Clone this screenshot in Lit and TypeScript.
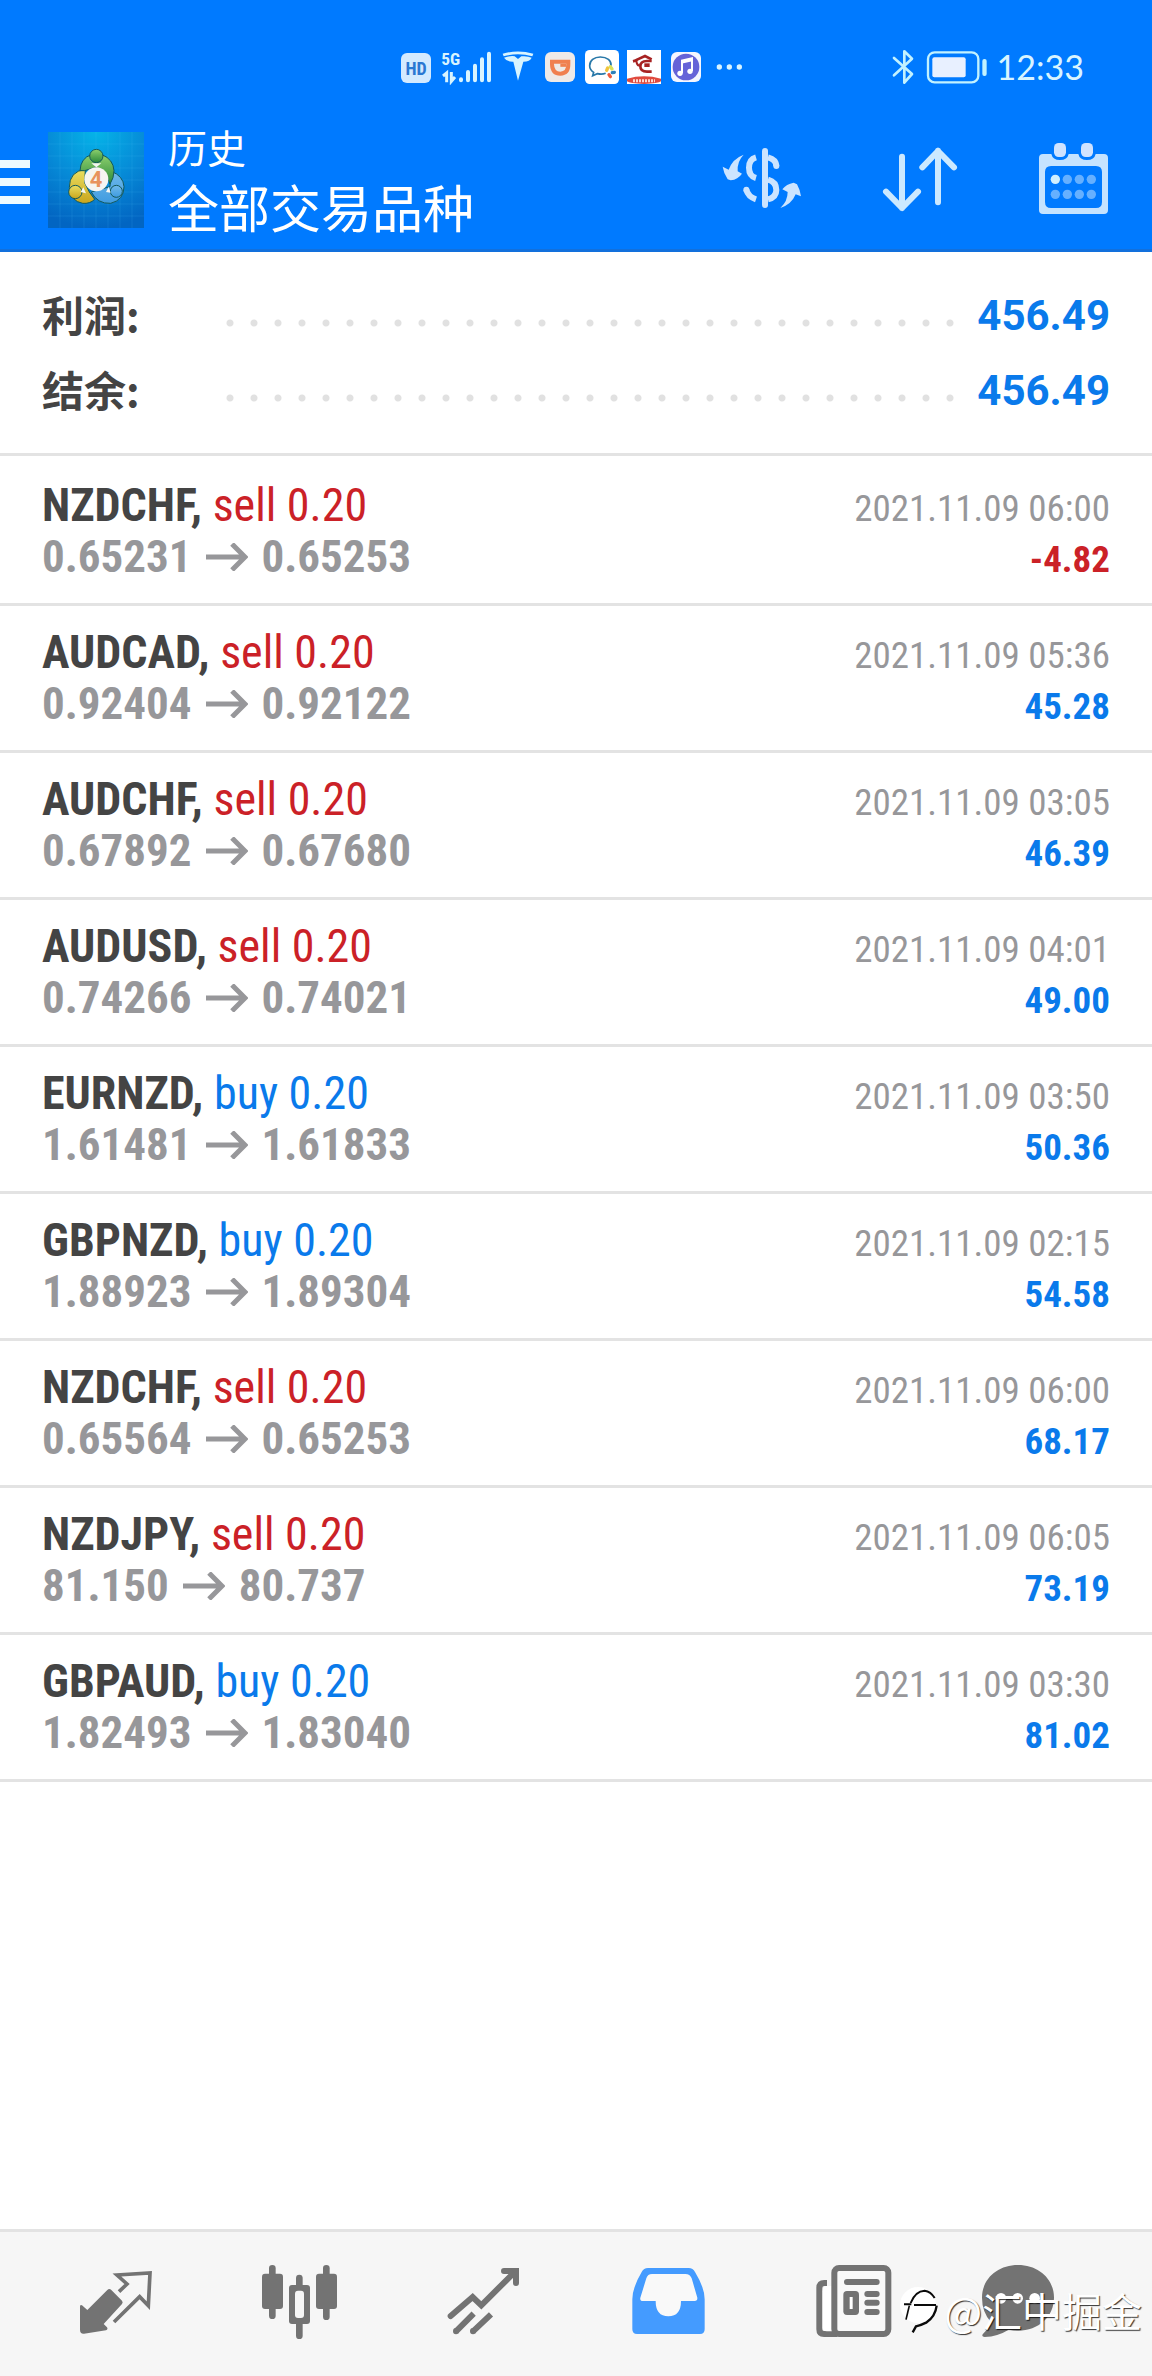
import { LitElement, html, svg, css } from "lit";
import { customElement } from "lit/decorators.js";

interface Deal {
  symbol: string;
  side: "sell" | "buy";
  open: string;
  close: string;
  time: string;
  profit: string;
}

const deals: Deal[] = [
  { symbol: "NZDCHF", side: "sell", open: "0.65231", close: "0.65253", time: "2021.11.09 06:00", profit: "-4.82" },
  { symbol: "AUDCAD", side: "sell", open: "0.92404", close: "0.92122", time: "2021.11.09 05:36", profit: "45.28" },
  { symbol: "AUDCHF", side: "sell", open: "0.67892", close: "0.67680", time: "2021.11.09 03:05", profit: "46.39" },
  { symbol: "AUDUSD", side: "sell", open: "0.74266", close: "0.74021", time: "2021.11.09 04:01", profit: "49.00" },
  { symbol: "EURNZD", side: "buy", open: "1.61481", close: "1.61833", time: "2021.11.09 03:50", profit: "50.36" },
  { symbol: "GBPNZD", side: "buy", open: "1.88923", close: "1.89304", time: "2021.11.09 02:15", profit: "54.58" },
  { symbol: "NZDCHF", side: "sell", open: "0.65564", close: "0.65253", time: "2021.11.09 06:00", profit: "68.17" },
  { symbol: "NZDJPY", side: "sell", open: "81.150", close: "80.737", time: "2021.11.09 06:05", profit: "73.19" },
  { symbol: "GBPAUD", side: "buy", open: "1.82493", close: "1.83040", time: "2021.11.09 03:30", profit: "81.02" },
];

const totals = [
  { label: "利润:", value: "456.49" },
  { label: "结余:", value: "456.49" },
];

@customElement("status-bar")
export class StatusBar extends LitElement {
  static styles = css`
    :host {
      display: flex;
      align-items: center;
      justify-content: flex-end;
      height: 36px;
      padding: 49px 68px 0 0;
      color: #d8f4ff;
      font-family: Lato, "Noto Sans", sans-serif;
      font-size: 34px;
      line-height: 36px;
    }
    svg { display: block; flex: none; }
    .notices { width: 344px; height: 36px; margin-right: 148px; }
    .power { width: 96px; height: 36px; margin-right: 9px; }
    .hd { font: 700 54px "Roboto Condensed", "Liberation Sans Narrow", sans-serif; fill: #2b78d2; }
    .net { font: 700 52px "Roboto Condensed", "Liberation Sans Narrow", sans-serif; fill: #d8f4ff; }
  `;

  render() {
    return html`
      <svg class="notices" viewBox="57 57 1032 108" aria-hidden="true">
        <rect x="60" y="69" width="90" height="90" rx="18" fill="#d3eaff" />
        <text class="hd" x="105" y="134" text-anchor="middle">HD</text>
        <text class="net" x="181" y="106">5G</text>
        <g fill="none" stroke="#d8f4ff" stroke-width="9">
          <path d="M186 138l11-9v28M211 126v28l11-13" />
        </g>
        <g stroke="#d8f4ff" stroke-width="12" stroke-linecap="round">
          <path d="M240 148v3M261 126v25M282 107v44M303 88v63M324 71v80" />
        </g>
        <path d="M365 71q46-13 92 0l-3 8q-43-12-86 0z" fill="#d8f4ff" />
        <path d="M369 83q22-7 32-4l10 8 10-8q18-2 31 4-5 12-25 12l-16 57-14-57q-20 1-28-12z" fill="#d8f4ff" />
        <rect x="492" y="66" width="90" height="90" rx="18" fill="#eeeae8" />
        <path d="M513 95h49v8q0 28-24 28t-25-28z" fill="none" stroke="#f08050" stroke-width="12" />
        <path d="M538 106h18" fill="none" stroke="#f08050" stroke-width="9" />
        <rect x="612" y="60" width="102" height="102" rx="14" fill="#fff" />
        <path d="M690 107c2-15-12-26-32-26-19 0-32 11-32 26 0 10 6 16 12 20l-3 10 14-6c8 2 17 2 25-1" fill="none" stroke="#2878a8" stroke-width="5" />
        <g stroke-width="10" stroke-linecap="round">
          <path d="M680 114l-3 7" stroke="#f2c43c" /><path d="M688 110l5 7" stroke="#d9e05a" />
          <path d="M700 127l-6 1" stroke="#2d80ba" /><path d="M684 134l4 6" stroke="#ef5a3a" />
        </g>
        <rect x="738" y="60" width="102" height="102" fill="#fff" />
        <path d="M756 94q8-2 14-6l22-10 20 10" fill="none" stroke="#a72222" stroke-width="8" />
        <path d="M812 93h-14q-20 0-20 16t20 16h14" fill="none" stroke="#a72222" stroke-width="8" />
        <path d="M766 92q0 10 8 16" fill="none" stroke="#a72222" stroke-width="6" />
        <rect x="790" y="100" width="16" height="11" fill="#a72222" />
        <path d="M738 146q51-14 102 0v8q-8 6-51 8-43-2-51-8z" fill="#e04a3e" />
        <path d="M756 152h66" stroke="#ffd9d0" stroke-width="9" stroke-dasharray="6 3" />
        <rect x="870" y="66" width="90" height="90" rx="18" fill="#f4f6ff" />
        <circle cx="915" cy="111" r="40" fill="#6563d8" />
        <path d="M903 130V92l30-7v38" fill="none" stroke="#fff" stroke-width="6" />
        <path d="M903 96l30-7" stroke="#fff" stroke-width="9" />
        <circle cx="897" cy="130" r="8" fill="#fff" /><circle cx="927" cy="124" r="8" fill="#fff" />
        <g fill="#d8f4ff"><circle cx="1015" cy="111" r="8" /><circle cx="1045" cy="111" r="8" /><circle cx="1075" cy="111" r="8" /></g>
      </svg>
      <svg class="power" viewBox="98 57 288 108" aria-hidden="true">
        <path d="M104 84l54 48-23 26V64l23 22-54 50" fill="none" stroke="#c2f2ff" stroke-width="8" stroke-linejoin="round" stroke-linecap="round" />
        <rect x="206" y="67" width="151" height="90" rx="20" fill="none" stroke="#c2f2ff" stroke-width="7" />
        <rect x="219" y="82" width="100" height="60" rx="6" fill="#e8f0ff" />
        <rect x="369" y="87" width="13" height="51" rx="6" fill="#c2f2ff" />
      </svg>
      <span>12:33</span>
    `;
  }
}

@customElement("history-header")
export class HistoryHeader extends LitElement {
  static styles = css`
    :host {
      display: flex;
      align-items: center;
      height: 144px;
      padding: 46px 42px 0 0;
      box-sizing: border-box;
      color: #fff;
      font-family: "Noto Sans CJK SC", sans-serif;
    }
    button {
      display: block;
      flex: none;
      padding: 0;
      border: 0;
      background: none;
      cursor: pointer;
    }
    svg { display: block; width: 100%; height: 100%; }
    .menu { width: 30px; height: 96px; }
    .logo { width: 96px; height: 96px; margin-left: 18px; flex: none; }
    .titles { flex: 1; margin-left: 24px; padding-bottom: 2px; }
    h1, p { margin: 0; font-weight: 400; white-space: nowrap; }
    p { font-size: 39px; line-height: 54px; }
    h1 { font-size: 51px; line-height: 66px; }
    .actions { display: flex; gap: 78px; }
    .swap, .sort, .calendar { height: 78px; }
    .swap, .sort { width: 80px; }
    .calendar { width: 72px; }
    .four { font: 700 66px Roboto, sans-serif; fill: #e8935e; }
  `;

  render() {
    return html`
      <button class="menu" aria-label="菜单">
        <svg viewBox="0 66 90 288"><path d="M0 150h90v24H0zM0 204h90v24H0zM0 258h90v24H0z" fill="#eefaff" /></svg>
      </button>
      <div class="logo">
        <svg viewBox="144 66 288 288" aria-hidden="true">
          <defs>
            <radialGradient id="sky" cx=".5" cy="0" r="1">
              <stop offset="0" stop-color="#05b4e8" /><stop offset=".55" stop-color="#0688d6" /><stop offset="1" stop-color="#0265c2" />
            </radialGradient>
            <linearGradient id="green" x2="0" y2="1"><stop stop-color="#8ed06d" /><stop offset="1" stop-color="#2c8a3b" /></linearGradient>
            <linearGradient id="gold" x2="0" y2="1"><stop stop-color="#eadf62" /><stop offset="1" stop-color="#c9a51c" /></linearGradient>
            <linearGradient id="blue" x2="0" y2="1"><stop stop-color="#6fb9ea" /><stop offset="1" stop-color="#3f9be0" /></linearGradient>
          </defs>
          <rect x="144" y="66" width="288" height="288" fill="url(#sky)" />
          <path d="M180 66v288M216 66v288M252 66v288M288 66v288M324 66v288M360 66v288M396 66v288M144 102h288M144 138h288M144 174h288M144 210h288M144 246h288M144 282h288M144 318h288" stroke="#5cc8f5" stroke-opacity=".22" stroke-width="2" />
          <g stroke-linejoin="round" stroke="#14595a" stroke-width="3">
            <path d="M334 184q36 14 38 46 0 40-40 50-40 2-58-34l20-6 36-10z" fill="url(#blue)" />
            <path d="M208 232q0-48 48-54l-2 40 14 28 16 22q-14 14-36 12-36-6-40-48z" fill="url(#gold)" />
            <path d="M240 182q2-38 34-48h32q34 14 36 48 0 22-12 40l-10-24-32-26-34 10z" fill="url(#green)" />
            <circle cx="289" cy="138" r="20" fill="url(#green)" />
            <circle cx="226" cy="246" r="20" fill="url(#gold)" />
            <circle cx="349" cy="244" r="18" fill="url(#blue)" />
          </g>
          <path d="M274 160h30l-15 12zM250 232l8 18-16-4zM326 230l-8 16 14 2z" fill="#f4f6f2" />
          <circle cx="289" cy="208" r="36" fill="#f6f5f2" />
          <text class="four" x="288" y="231" text-anchor="middle">4</text>
        </svg>
      </div>
      <div class="titles">
        <p>历史</p>
        <h1>全部交易品种</h1>
      </div>
      <div class="actions">
        <button class="swap" aria-label="货币">
          <svg viewBox="66 63 240 234" fill="#cce4ff">
            <path d="M131 104q-20 20-18 50l13 7q-12 17-34 20l-9-3q-12-18-15-38l18 9q12-33 45-45z" />
            <path d="M241 264q22-20 22-48l-16-8q12-16 34-20l10 5q10 18 12 36l-16-6q-12 30-46 41z" />
            <rect x="186" y="84" width="18" height="180" rx="9" />
            <g fill="none" stroke="#cce4ff" stroke-width="18">
              <path d="M168 112q-21 6-21 31t21 31M204 112q24 6 25 26" />
              <path d="M204 179q25 7 25 31 0 22-25 28M168 238q-24-8-29-29" />
              <path d="M229 137v1M139 209v1" stroke-linecap="round" />
            </g>
          </svg>
        </button>
        <button class="sort" aria-label="排序">
          <svg viewBox="540 63 228 234" fill="none" stroke="#cce9ff" stroke-width="18" stroke-linecap="round" stroke-linejoin="round">
            <path d="M600 110v154M552 215l48 49 48-49M708 247V92M661 142l47-49 48 49" />
          </svg>
        </button>
        <button class="calendar" aria-label="日期">
          <svg viewBox="1017 63 216 234">
            <path fill-rule="evenodd" fill="#c5e3ff" d="M1032 102h25q4 18 26 18t26-18h29q4 18 26 18t26-18h25q12 0 12 12v156q0 12-12 12h-183q-12 0-12-12V114q0-12 12-12zM1056 138q-18 0-18 18v90q0 18 18 18h135q18 0 18-18v-90q0-18-18-18z" />
            <rect x="1065" y="69" width="36" height="42" rx="14" fill="#d0e3ff" />
            <rect x="1146" y="69" width="36" height="42" rx="14" fill="#d0e3ff" />
            ${[0, 1, 2, 3, 4, 5, 6, 7].map(
              (i) => svg`<circle cx=${1069 + (i % 4) * 36} cy=${i < 4 ? 178 : 223} r="14" fill=${i ? "#66b0ff" : "#cfefff"} />`,
            )}
          </svg>
        </button>
      </div>
    `;
  }
}

@customElement("totals-panel")
export class TotalsPanel extends LitElement {
  static styles = css`
    :host {
      display: block;
      padding: 24px 42px 27px;
      border-bottom: 3px solid #e3e3e3;
    }
    dl { margin: 0; }
    .row { display: flex; align-items: center; height: 75px; }
    dt {
      width: 176px;
      color: #444;
      font: 700 42px/75px "Noto Sans CJK SC", sans-serif;
    }
    .dots {
      flex: 1;
      height: 8px;
      margin: 18px 22px 0 0;
      background: radial-gradient(circle at 12px 4px, #e1e1e1 3px, transparent 4px) 0 0 / 24px 8px repeat-x;
    }
    dd {
      margin: 0;
      padding-top: 4px;
      color: #0a7aeb;
      font: 700 42px/60px Roboto, sans-serif;
    }
  `;

  render() {
    return html`
      <dl>
        ${totals.map((t) => html`<div class="row"><dt>${t.label}</dt><span class="dots"></span><dd>${t.value}</dd></div>`)}
      </dl>
    `;
  }
}

@customElement("deal-list")
export class DealList extends LitElement {
  static styles = css`
    :host {
      display: block;
      padding-top: 3px;
      font-family: "Roboto Condensed", "Liberation Sans Narrow", sans-serif;
    }
    ul { margin: 0; padding: 0; list-style: none; }
    li {
      padding: 21px 42px;
      border-bottom: 3px solid #e3e3e3;
      line-height: 51px;
    }
    .line {
      display: flex;
      align-items: baseline;
      justify-content: space-between;
      height: 51px;
      white-space: nowrap;
    }
    .deal { font-size: 46px; font-weight: 700; color: #444; }
    .sell, .buy { font-weight: 400; }
    .prices {
      display: flex;
      align-items: center;
      gap: 14px;
      font-size: 45px;
      font-weight: 700;
      color: #97979a;
    }
    .arrow { width: 42px; height: 28px; }
    .time { font-size: 37px; color: #97979a; }
    .profit { font-size: 37px; font-weight: 700; }
    .sell, .loss { color: #cb2127; }
    .buy, .gain { color: #0a7aeb; }
  `;

  render() {
    return html`
      <ul>
        ${deals.map(
          (d) => html`
            <li>
              <div class="line">
                <span class="deal">${d.symbol}, <span class=${d.side}>${d.side} 0.20</span></span>
                <time class="time">${d.time}</time>
              </div>
              <div class="line">
                <span class="prices">
                  <span>${d.open}</span>
                  <svg class="arrow" viewBox="0 0 42 28" aria-label="→"><path d="M0 14h38M26 1l13 13-13 13" fill="none" stroke="currentColor" stroke-width="5" /></svg>
                  <span>${d.close}</span>
                </span>
                <span class="profit ${d.profit.startsWith("-") ? "loss" : "gain"}">${d.profit}</span>
              </div>
            </li>
          `,
        )}
      </ul>
    `;
  }
}

@customElement("tab-bar")
export class TabBar extends LitElement {
  static styles = css`
    :host {
      display: block;
      position: relative;
      border-top: 3px solid #e3e3e3;
      background: #f6f6f6;
    }
    nav {
      display: grid;
      grid-template-columns: repeat(5, 184fr) 148fr;
      height: 144px;
      padding: 0 60px 0 24px;
    }
    button {
      display: grid;
      place-items: center;
      padding: 0;
      border: 0;
      background: none;
      color: #737373;
      cursor: pointer;
    }
    button[aria-current] { color: #449bff; }
    svg { display: block; width: 84px; height: 84px; }
    .mark {
      position: absolute;
      right: 10px;
      bottom: 36px;
      display: flex;
      align-items: center;
      gap: 4px;
      color: #fff;
      font: 400 40px/60px "Noto Sans CJK SC", sans-serif;
      text-shadow: 1px 1px 1px rgba(0, 0, 0, 0.8);
      pointer-events: none;
    }
    .mark svg { width: 42px; height: 50px; }
  `;

  render() {
    return html`
      <nav>
        <button aria-label="行情">
          <svg viewBox="222 156 252 252">
            <path d="M240 290q0-8 6-4l16 14 60-60q6-6 12 0l32 32q4 5 0 10l-55 60 10 10q4 6-3 9l-66 10q-12 1-12-12z" fill="currentColor" />
            <path d="M357 245l24-23-30-27 99-6-5 98-26-27-77 76" fill="none" stroke="currentColor" stroke-width="11" />
          </svg>
        </button>
        <button aria-label="图表">
          <svg viewBox="774 156 252 252" fill="currentColor">
            <rect x="807" y="165" width="20" height="162" rx="10" /><rect x="786" y="191" width="63" height="106" rx="9" />
            <rect x="969" y="165" width="20" height="165" rx="10" /><rect x="948" y="191" width="63" height="106" rx="9" />
            <rect x="888" y="194" width="20" height="193" rx="10" /><rect x="867" y="225" width="63" height="117" rx="9" />
            <rect x="885" y="242" width="27" height="82" rx="9" fill="#f6f6f6" />
          </svg>
        </button>
        <button aria-label="交易">
          <svg viewBox="126 156 252 252" fill="none" stroke="currentColor" stroke-width="18">
            <path d="M152 318l66-57 26 25 100-100" stroke-linecap="round" />
            <path d="M312 183h36v36" stroke-linecap="round" />
            <path d="M328 174h22q7 0 7 7v22z" fill="currentColor" stroke="none" />
            <path d="M168 364l53-53M219 364l54-51" /><path d="M168 363v1M219 363v1" stroke-linecap="round" />
          </svg>
        </button>
        <button aria-label="历史" aria-current="page">
          <svg viewBox="678 156 252 252">
            <path d="M744 174h122q13 0 19 12 29 47 29 82v90q0 14-14 14H711q-14 0-14-14v-90q0-35 28-82 6-12 19-12z" fill="currentColor" />
            <path d="M756 192h100q14 0 19 13l17 58q1 10-8 10h-41q0 46-38 46t-38-46h-38q-10 0-8-10l18-58q4-13 17-13z" fill="#f9f9f9" />
          </svg>
        </button>
        <button aria-label="新闻">
          <svg viewBox="90 156 252 252">
            <path d="M141 219h-8q-15 0-15 15v124q0 14 14 14h40" fill="none" stroke="currentColor" stroke-width="18" />
            <path fill="#fff" d="M128 244q0-16 14-16h14v136h-16q-12 0-12-12z" />
            <rect x="163" y="174" width="162" height="198" rx="14" fill="#f9f9f9" stroke="currentColor" stroke-width="18" />
            <path d="M201 216h89M262 252h28M262 278h28M262 306h28" stroke="currentColor" stroke-width="18" stroke-linecap="round" />
            <rect x="190" y="243" width="47" height="72" rx="11" fill="currentColor" /><rect x="209" y="261" width="9" height="36" fill="#fff" />
          </svg>
        </button>
        <button aria-label="聊天">
          <svg viewBox="588 156 252 252">
            <path d="M714 165c62 0 108 42 108 98s-46 99-108 99q-14 0-28-3-32 20-72 22-10-1-6-8 18-18 24-38-26-30-26-72c0-56 46-98 108-98z" fill="currentColor" />
            <circle cx="663" cy="265" r="16" fill="#fff" /><circle cx="713" cy="265" r="16" fill="#fff" /><circle cx="764" cy="265" r="16" fill="#fff" />
          </svg>
        </button>
      </nav>
      <div class="mark">
        <svg viewBox="6 30 126 150" aria-hidden="true">
          <circle cx="66" cy="90" r="54" fill="#fff" />
          <g fill="none" stroke="#0a0a0a">
            <path d="M44 84q14-36 42-37 18 2 30 22" stroke-width="6" />
            <path d="M24 88h22M54 90h66" stroke-width="6" />
            <path d="M40 92l-10 42" stroke-width="5" />
            <path d="M122 92q-4 32-30 50-16 8-32 12l-10 18" stroke-width="7" />
          </g>
        </svg>
        <span>@汇中掘金</span>
      </div>
    `;
  }
}

@customElement("app-root")
export class AppRoot extends LitElement {
  static styles = css`
    :host {
      display: flex;
      flex-direction: column;
      min-height: 100vh;
      background: #fff;
    }
    header {
      padding-bottom: 20px;
      background: #007aff;
      border-bottom: 3px solid #1270dc;
    }
    main { flex: 1; }
  `;

  render() {
    return html`
      <header>
        <status-bar></status-bar>
        <history-header></history-header>
      </header>
      <main>
        <totals-panel></totals-panel>
        <deal-list></deal-list>
      </main>
      <tab-bar></tab-bar>
    `;
  }
}
